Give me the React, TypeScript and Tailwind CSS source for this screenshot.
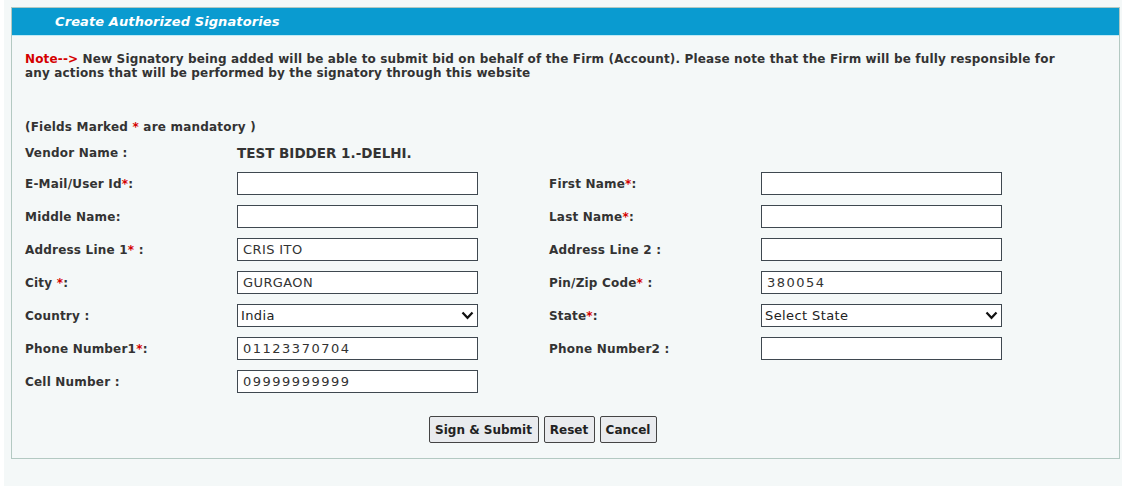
import React from "react";

const font = { fontFamily: '"DejaVu Sans", Verdana, sans-serif' };

function Req() {
  return <span className="text-[#d40000]">*</span>;
}

function Label({ children }: { children: React.ReactNode }) {
  return (
    <div className="w-[212px] shrink-0 text-[12px] font-bold tracking-[0.2px] text-[#333]">
      {children}
    </div>
  );
}

function TextBox({ value = "", digits = false }: { value?: string; digits?: boolean }) {
  return (
    <input
      readOnly
      value={value}
      className={`h-[23px] w-[241px] shrink-0 border border-[#3f4850] bg-white px-[5px] text-[13px] text-[#333] outline-none ${
        digits ? "tracking-[1.5px]" : "tracking-[0.4px]"
      }`}
      style={font}
    />
  );
}

function SelectBox({ value }: { value: string }) {
  return (
    <div className="relative flex h-[23px] w-[241px] shrink-0 items-center border border-[#3f4850] bg-white pl-[3px] text-[13px] tracking-[0.4px] text-[#222]">
      {value}
      <svg
        className="absolute right-[3px] top-[6px]"
        width="13"
        height="9"
        viewBox="0 0 13 9"
        fill="none"
      >
        <polyline points="1.5,1.5 6.5,6.8 11.5,1.5" stroke="#111" strokeWidth="2.2" />
      </svg>
    </div>
  );
}

function Row({ children }: { children: React.ReactNode }) {
  return <div className="mt-[10px] flex h-[23px] items-center">{children}</div>;
}

export default function App() {
  return (
    <div className="min-h-[492px] bg-white" style={font}>
      <div className="ml-[4px] h-[486px] w-[1118px] bg-[#f4f8f8] pl-[7px] pt-[7px]">
        <div className="w-[1109px] border border-[#b3c9c2] bg-[#f4f8f8]">
          <div className="flex h-[28px] items-center border-b border-[#bfeaf6] bg-[#0a9bd0] pl-[43px] text-[13px] font-bold italic tracking-[0.1px] text-white">
            Create Authorized Signatories
          </div>

          <div className="px-[13px] pb-[15px]">
            <p className="w-[1035px] pt-[16px] text-[12px] font-bold leading-[14px] tracking-[0.15px] text-[#333]">
              <span className="text-[#d40000]">Note--&gt; </span>New Signatory being added will be able to submit bid on behalf of the Firm (Account). Please note that the Firm will be fully responsible for any actions that will be performed by the signatory through this website
            </p>

            <div className="mt-[40px] text-[12px] font-bold leading-[14px] tracking-[0.2px] text-[#333]">
              (Fields Marked <Req /> are mandatory )
            </div>

            <div className="mt-[8px] flex h-[22px] items-center">
              <Label>Vendor Name :</Label>
              <div className="text-[13.5px] font-bold text-[#333]">TEST BIDDER 1.-DELHI.</div>
            </div>

            <div className="mt-[8px] flex h-[23px] items-center">
              <Label>
                E-Mail/User Id<Req />:
              </Label>
              <TextBox />
              <div className="w-[71px] shrink-0" />
              <Label>
                First Name<Req />:
              </Label>
              <TextBox />
            </div>

            <Row>
              <Label>Middle Name:</Label>
              <TextBox />
              <div className="w-[71px] shrink-0" />
              <Label>
                Last Name<Req />:
              </Label>
              <TextBox />
            </Row>

            <Row>
              <Label>
                Address Line 1<Req /> :
              </Label>
              <TextBox value="CRIS ITO" />
              <div className="w-[71px] shrink-0" />
              <Label>Address Line 2 :</Label>
              <TextBox />
            </Row>

            <Row>
              <Label>
                City <Req />:
              </Label>
              <TextBox value="GURGAON" />
              <div className="w-[71px] shrink-0" />
              <Label>
                Pin/Zip Code<Req /> :
              </Label>
              <TextBox value="380054" digits />
            </Row>

            <Row>
              <Label>Country :</Label>
              <SelectBox value="India" />
              <div className="w-[71px] shrink-0" />
              <Label>
                State<Req />:
              </Label>
              <SelectBox value="Select State" />
            </Row>

            <Row>
              <Label>
                Phone Number1<Req />:
              </Label>
              <TextBox value="01123370704" digits />
              <div className="w-[71px] shrink-0" />
              <Label>Phone Number2 :</Label>
              <TextBox />
            </Row>

            <Row>
              <Label>Cell Number :</Label>
              <TextBox value="09999999999" digits />
            </Row>

            <div className="mt-[23px] flex w-[1035px] justify-center gap-[5px]">
              <button className="h-[27px] w-[110px] rounded-[2px] border border-[#444] bg-[#e9ebee] text-[12px] font-bold text-[#222]">
                Sign &amp; Submit
              </button>
              <button className="h-[27px] w-[51px] rounded-[2px] border border-[#444] bg-[#e9ebee] text-[12px] font-bold text-[#222]">
                Reset
              </button>
              <button className="h-[27px] w-[57px] rounded-[2px] border border-[#444] bg-[#e9ebee] text-[12px] font-bold text-[#222]">
                Cancel
              </button>
            </div>
          </div>
        </div>
      </div>
    </div>
  );
}
